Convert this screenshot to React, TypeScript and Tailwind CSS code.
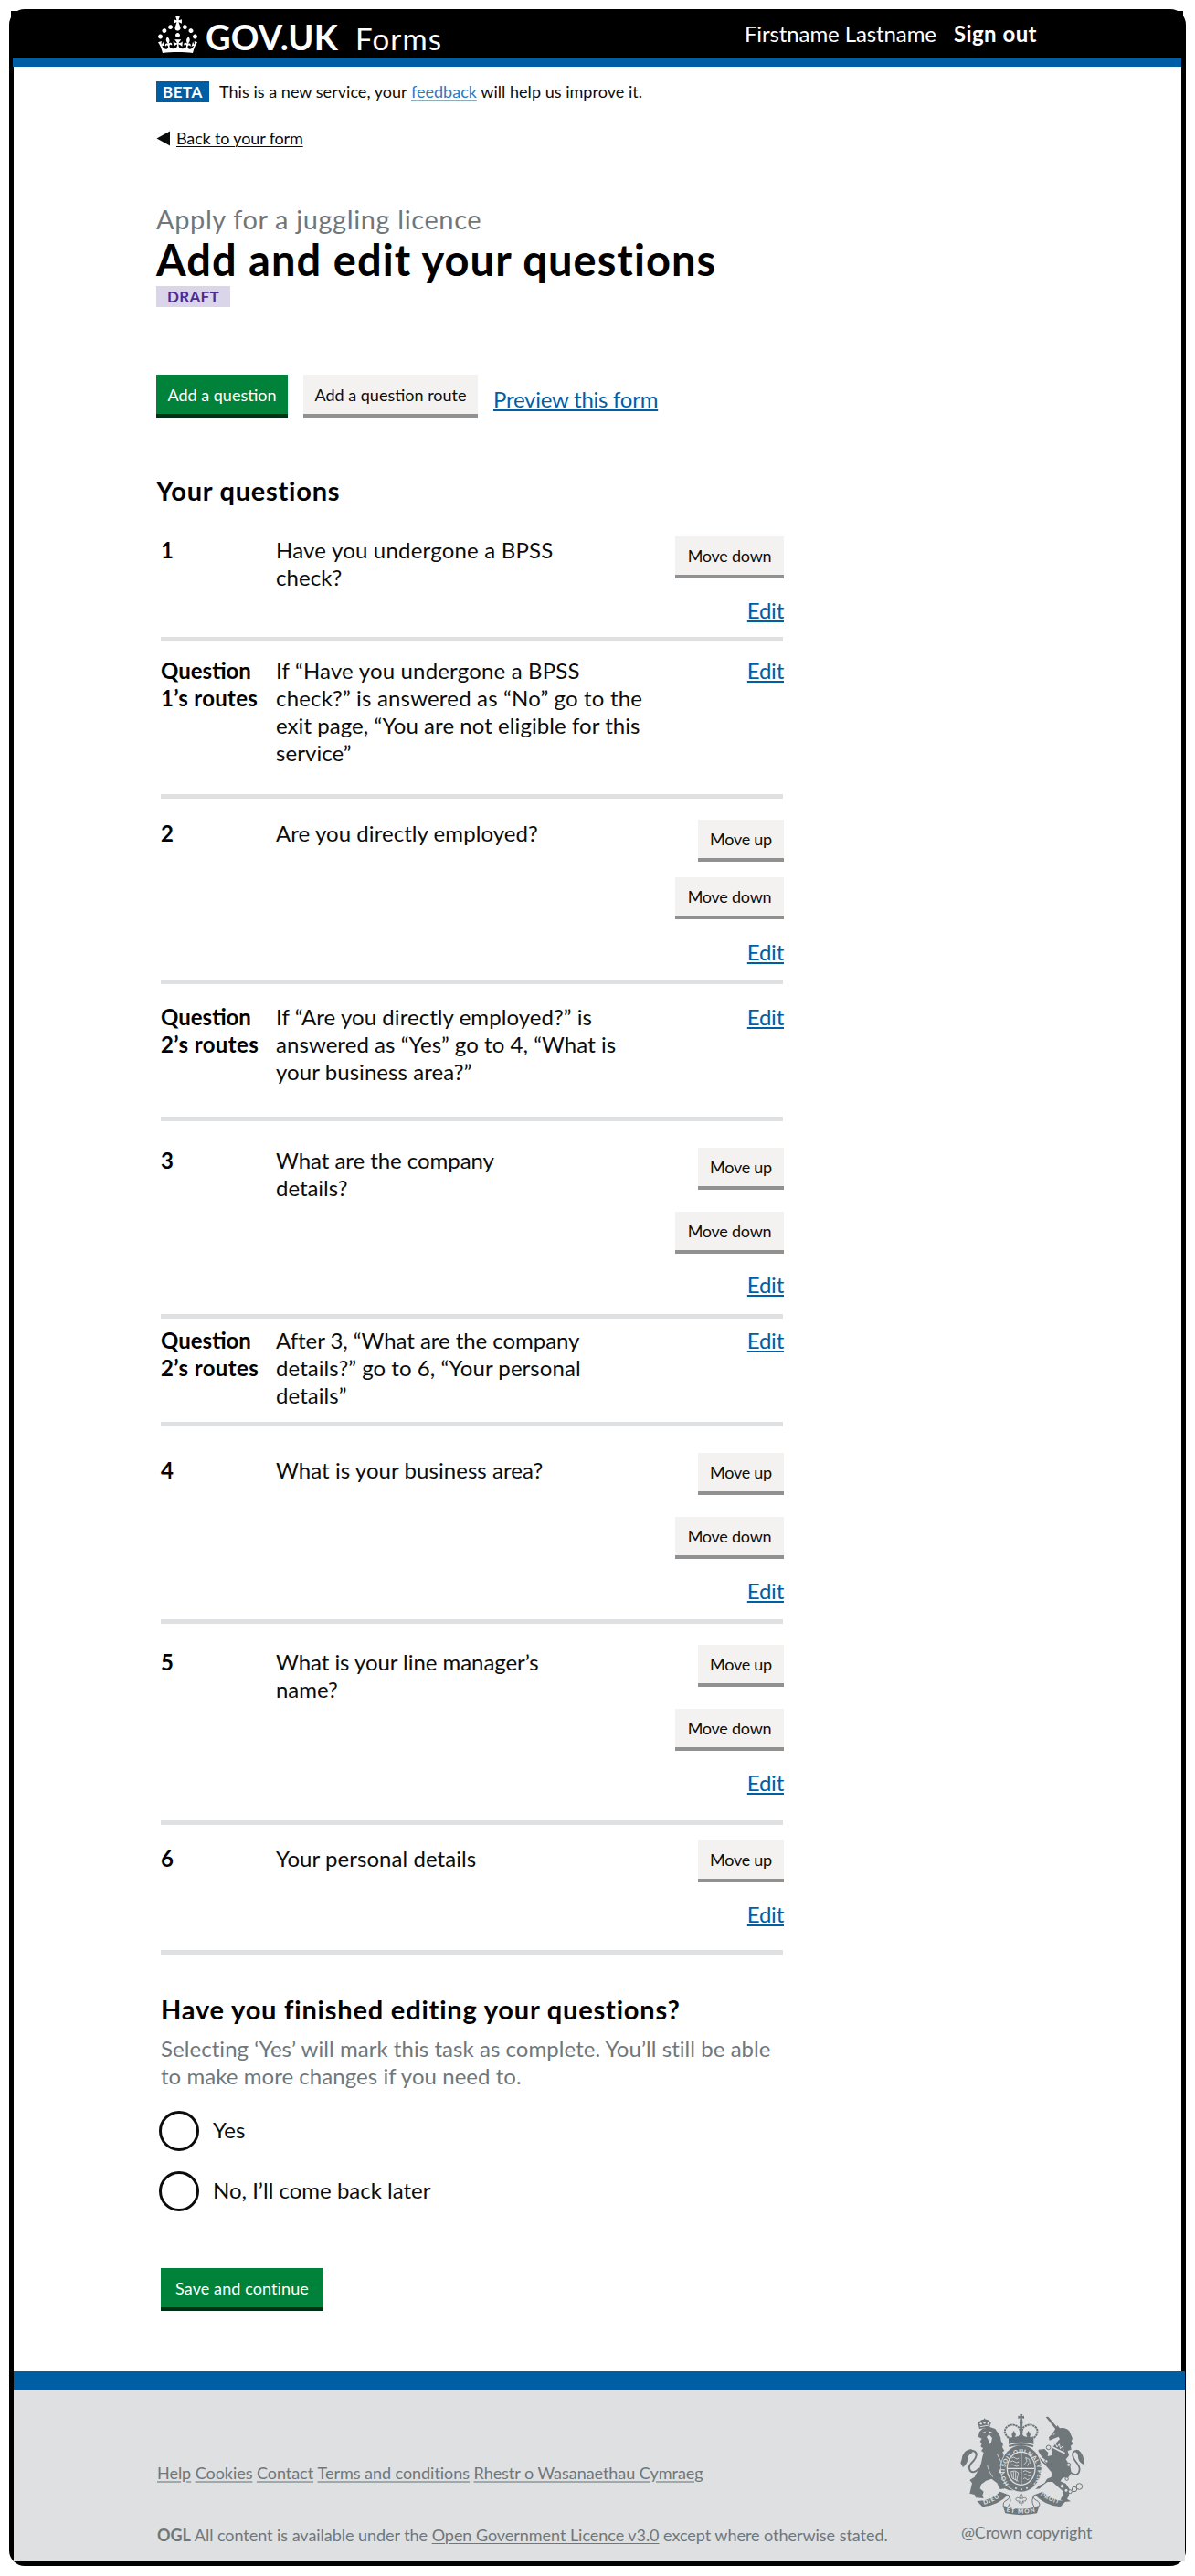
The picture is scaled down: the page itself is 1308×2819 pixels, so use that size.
import React from "react";

const CROWN =
  "M22.6 10.4c-1 .4-2-.1-2.4-1-.4-.9.1-2 1-2.4.9-.4 2 .1 2.4 1s-.1 2-1 2.4m-5.9 6.7c-.9.4-2-.1-2.4-1-.4-.9.1-2 1-2.4.9-.4 2 .1 2.4 1s-.1 2-1 2.4m10.8-3.7c-1 .4-2-.1-2.4-1-.4-.9.1-2 1-2.4.9-.4 2 .1 2.4 1s0 2-1 2.4m3.3 4.8c-1 .4-2-.1-2.4-1-.4-.9.1-2 1-2.4.9-.4 2 .1 2.4 1s-.1 2-1 2.4M17 4.7l2.3 1.2V2.5l-2.3.7-.2-.2.9-3h-3.4l.9 3-.2.2c-.1.1-2.3-.7-2.3-.7v3.4L15 4.7c.1.1.1.2.2.2l-1.3 4c-.1.2-.1.4-.1.6 0 1.1.8 2 1.9 2.2h.7c1-.2 1.9-1.1 1.9-2.1 0-.2 0-.4-.1-.6l-1.3-4c-.1-.2 0-.2.1-.3m-7.6 5.7c.9.4 2-.1 2.4-1 .4-.9-.1-2-1-2.4-.9-.4-2 .1-2.4 1s0 2 1 2.4m-5 3c.9.4 2-.1 2.4-1 .4-.9-.1-2-1-2.4-.9-.4-2 .1-2.4 1s.1 2 1 2.4m-3.2 4.8c.9.4 2-.1 2.4-1 .4-.9-.1-2-1-2.4-.9-.4-2 .1-2.4 1s0 2 1 2.4m14.8 11c4.4 0 8.6.3 12.3.8 1.1-4.5 2.4-7 3.7-8.8l-2.5-.9c.2 1.3.3 1.9 0 2.7-.4-.4-.8-1.1-1.1-2.3l-1.2 4c.7-.5 1.3-.8 2-.9-1.1 2.5-2.6 3.1-3.5 3-1.1-.2-1.7-1.2-1.5-2.1.3-1.2 1.5-1.5 2.1-.1 1.1-2.3-.8-3-2-2.3 1.9-1.9 2.1-3.5.6-5.6-2.1 1.6-2.1 3.2-1.2 5.5-1.2-1.4-3.2-.6-2.5 1.6.9-1.4 2.1-.5 1.9.8-.2 1.1-1.7 2.1-3.5 1.9-2.7-.2-2.9-2.1-2.9-3.6.7-.1 1.9.5 2.9 1.9l.4-4.3c-1.1 1.1-2.1 1.4-3.2 1.4.4-1.2 2.1-3 2.1-3h-5.4s1.7 1.9 2.1 3c-1.1 0-2.1-.2-3.2-1.4l.4 4.3c1-1.4 2.2-2 2.9-1.9-.1 1.5-.2 3.4-2.9 3.6-1.9.2-3.4-.8-3.5-1.9-.2-1.3 1-2.2 1.9-.8.7-2.3-1.2-3-2.5-1.6.9-2.2.9-3.9-1.2-5.5-1.5 2-1.3 3.7.6 5.6-1.2-.7-3.1 0-2 2.3.6-1.4 1.8-1.1 2.1.1.2.9-.3 1.9-1.5 2.1-.9.2-2.4-.5-3.5-3 .6 0 1.2.3 2 .9l-1.2-4c-.3 1.1-.7 1.9-1.1 2.3-.3-.8-.2-1.4 0-2.7l-2.9.9C1.3 23 2.6 25.5 3.7 30c3.7-.5 7.9-.8 12.3-.8";

type Row = {
  label: React.ReactNode;
  text: React.ReactNode;
  row: string;
  textTop: string;
  actionsTop: string;
  up?: boolean;
  down?: boolean;
  gap?: string;
  editGap?: string;
};

const ROWS: Row[] = [
  {
    label: "1",
    text: <><span className="tracking-[0.2px]">Have you undergone a BPSS</span><br />check?</>,
    row: "h-[122px]", textTop: "pt-[7px]", actionsTop: "pt-[7px]", down: true, editGap: "mt-[20px]",
  },
  {
    label: <>Question<br /><span className="tracking-[0.3px]">1’s routes</span></>,
    text: <><span className="tracking-[0.17px]">If “Have you undergone a BPSS</span><br /><span className="tracking-[0.18px]">check?” is answered as “No” go to the</span><br />exit page, “You are not eligible for this<br />service”</>,
    row: "h-[172px]", textTop: "pt-[17px]", actionsTop: "pt-[17px]",
  },
  {
    label: "2",
    text: <>Are you directly employed?</>,
    row: "h-[203px]", textTop: "pt-[23px]", actionsTop: "pt-[23px]", up: true, down: true, gap: "gap-[17px]", editGap: "mt-[21px]",
  },
  {
    label: <>Question<br /><span className="tracking-[0.4px]">2’s routes</span></>,
    text: <>If “Are you directly employed?” is<br />answered as “Yes” go to 4, “What is<br />your business area?”</>,
    row: "h-[150px]", textTop: "pt-[21px]", actionsTop: "pt-[21px]",
  },
  {
    label: "3",
    text: <span className="tracking-[-0.05px]">What are the company<br />details?</span>,
    row: "h-[216px]", textTop: "pt-[28px]", actionsTop: "pt-[29px]", up: true, down: true, gap: "gap-[24px]", editGap: "mt-[19px]",
  },
  {
    label: <>Question<br /><span className="tracking-[0.4px]">2’s routes</span></>,
    text: <><span className="tracking-[-0.05px]">After 3, “What are the company</span><br />details?” go to 6, “Your personal<br />details”</>,
    row: "h-[118px]", textTop: "pt-[9px]", actionsTop: "pt-[9px]",
  },
  {
    label: "4",
    text: <>What is your business area?</>,
    row: "h-[216px]", textTop: "pt-[33px]", actionsTop: "pt-[29px]", up: true, down: true, gap: "gap-[24px]", editGap: "mt-[20px]",
  },
  {
    label: "5",
    text: <span className="tracking-[-0.05px]">What is your line manager’s<br />name?</span>,
    row: "h-[220px]", textTop: "pt-[27px]", actionsTop: "pt-[23px]", up: true, down: true, gap: "gap-[24px]", editGap: "mt-[20px]",
  },
  {
    label: "6",
    text: <>Your personal details</>,
    row: "h-[142px]", textTop: "pt-[22px]", actionsTop: "pt-[17px]", up: true, editGap: "mt-[20px]",
  },
];

function MoveButton({ children, width }: { children: React.ReactNode; width: string }) {
  return (
    <button className={`h-[46px] ${width} border-b-[4px] border-[#929191] bg-[#f3f2f1] text-center text-[18px] leading-[41px] tracking-[-0.25px] whitespace-nowrap text-[#0b0c0c]`}>
      {children}
    </button>
  );
}

function QuestionRow({ r }: { r: Row }) {
  return (
    <li className={`flex border-b-[5px] border-[#dee0e2] text-[24px] leading-[30px] ${r.row}`}>
      <div className={`w-[126px] shrink-0 font-bold text-black ${r.textTop}`}>{r.label}</div>
      <div className={`flex-1 tracking-[0.06px] whitespace-nowrap ${r.textTop}`}>{r.text}</div>
      <div className={`-mr-[1px] flex shrink-0 flex-col items-end ${r.actionsTop}`}>
        {(r.up || r.down) && (
          <div className={`flex flex-col items-end ${r.gap ?? ""}`}>
            {r.up && <MoveButton width="w-[94px]">Move up</MoveButton>}
            {r.down && <MoveButton width="w-[119px]">Move down</MoveButton>}
          </div>
        )}
        <a className={`tracking-[-0.25px] text-[#005ea5] underline decoration-[1.5px] underline-offset-[2px] ${r.editGap ?? ""}`}>Edit</a>
      </div>
    </li>
  );
}

function Crest() {
  const ink = "#6f777b";
  const paper = "#dee0e2";
  return (
    <svg viewBox="0 0 450 372" className="h-[124px] w-[150px]" fill={ink}>
      <defs>
        <path id="garter" d="M175 248A54 61 0 1 1 254 250" />
        <path id="dieu" d="M93 315Q122 308 152 285" />
        <path id="mon" d="M166 337Q215 350 266 337" />
        <path id="droit" d="M278 283Q310 307 350 314" />
      </defs>

      {/* ribbon */}
      <path d="M70 303Q118 302 146 272L172 282Q140 318 88 322Z" />
      <path d="M362 303Q314 302 286 272L260 282Q292 318 344 322Z" />
      <path d="M155 318Q215 340 275 318L267 343Q215 354 163 343Z" />
      <path d="M172 282Q182 292 168 300Q154 306 157 319M260 282Q250 292 264 300Q278 306 275 319M172 282Q188 300 172 322M260 282Q244 300 258 322" fill="none" stroke={ink} strokeWidth="3" />
      <g fill={paper} fontFamily="Lato" fontWeight="900">
        <text fontSize="20"><textPath href="#dieu" textLength="56">DIEU</textPath></text>
        <text fontSize="20"><textPath href="#mon" textLength="96">ET MON</textPath></text>
        <text fontSize="18"><textPath href="#droit" textLength="66">DROIT</textPath></text>
      </g>
      <path d="M215 278q-9 10-3 18q-11-9-15 1q2 9 14 6l-4 6h16l-4-6q12 3 14-6q-4-10-15-1q6-8-3-18Z" fill={paper} stroke={ink} strokeWidth="2.5" />
      <path d="M213 308h4v10h-4Z" />

      {/* lion */}
      <path d="M78 66l-4-16q-3-9 6-9q3-6 12-6l3-4l3 4q10-1 12 6q8 1 5 9l-4 12Z" />
      <g fill={paper}>
        <circle cx="83" cy="49" r="3.5" /><circle cx="95" cy="46" r="3.5" /><circle cx="107" cy="48" r="3.5" />
        <path d="M80 58l32-6v3l-32 6Z" />
      </g>
      <path d="M78 76L88 66L112 60L130 66L140 80L147 92L149 106L156 116L153 126L160 138L154 142L160 158L172 180L160 176L164 196L148 192L142 210L158 214L160 236L170 248L186 258L192 268L176 268L162 262L146 264L136 244L118 230L100 236L84 248L80 262L92 272L88 284L92 294L66 292L62 282L46 278L50 262L54 244L46 234L62 224L68 212L78 196L84 178L88 158L92 144L84 138L90 130L82 124L86 114L80 108L86 98L74 92Z" />
      <path d="M88 78l12-4l-5 6zM108 74l12 2l-8 4zM102 92l8-8l10 12l-3 14l-6 6l-3-12Z" fill={paper} />
      <path d="M136 148L150 176L146 188M104 186Q110 210 122 224" fill="none" stroke={paper} strokeWidth="2.5" />
      <path d="M78 196Q54 218 46 200Q40 188 58 172Q76 150 62 140Q48 132 34 146Q22 160 24 176" fill="none" stroke={ink} strokeWidth="6" />
      <path d="M52 132Q24 134 20 166L16 178L24 192Q38 182 40 166Q40 150 56 144Z" />

      {/* unicorn */}
      <path d="M296 27L304 26L336 64L329 68Z" />
      <path d="M328 66L334 54L342 64Q362 60 374 74L384 98L380 106L386 114L378 122L380 134L368 138L372 154L362 166L376 188L380 210L370 226L352 226L344 238L362 246L374 264L372 284L366 296L378 304L356 306L344 298L352 284L352 270L338 258L318 240L302 240L288 250L276 262L262 264L274 252L292 244L300 230L314 224L316 210L304 196L292 182L280 172L274 158L286 170L296 180L300 172L284 160L272 140L272 134L292 132L304 144L302 156L318 152L314 134L322 120L342 100L338 92L322 98L308 104L306 94L316 84Z" />
      <path d="M318 84l8-3l-2 5zM316 122l44 22l-2 5l-44-22Z" fill={paper} />
      <path d="M322 122l5-10l6 14l7-10l4 15l7-8l3 13" fill="none" stroke={paper} strokeWidth="3" />
      <path d="M378 210Q396 222 404 210Q412 196 398 178Q384 162 384 148Q388 136 402 138Q418 150 420 178" fill="none" stroke={ink} strokeWidth="5" />
      <path d="M396 134Q414 140 414 162Q422 170 422 184Q402 174 402 158Q402 146 392 142Z" />
      <g fill={paper} stroke={ink} strokeWidth="3">
        <circle cx="305" cy="127" r="7" /><circle cx="298" cy="172" r="5" /><circle cx="371" cy="184" r="6" />
        <circle cx="365" cy="230" r="5" /><circle cx="350" cy="254" r="7" /><circle cx="363" cy="268" r="6" />
        <circle cx="376" cy="272" r="6" /><circle cx="390" cy="264" r="8" /><circle cx="406" cy="255" r="10" />
      </g>

      {/* garter and shield */}
      <ellipse cx="215" cy="196" rx="68" ry="78" fill={paper} />
      <ellipse cx="215" cy="196" rx="66" ry="76" />
      <text fill={paper} fontFamily="Lato" fontWeight="900" fontSize="19">
        <textPath href="#garter" textLength="280">HONI SOIT QUI MAL Y PENSE</textPath>
      </text>
      <ellipse cx="215" cy="196" rx="48" ry="56" fill={paper} />
      <ellipse cx="215" cy="196" rx="44" ry="52" />
      <g fill="none" stroke={paper} strokeWidth="4">
        <path d="M215 144v104M171 196h88" />
      </g>
      <g fill="none" stroke={paper} strokeWidth="2.5">
        <path d="M184 162q7-6 12 0t12 0M180 174q8-6 14 0t14 0M178 186q8-6 15 0t15 0" />
        <path d="M222 206q7-6 14 0t14 0M222 218q7-6 14 0t12 0M222 230q6-6 10 0t10 0" />
        <path d="M224 184l10-12l-4-12l12 6l2 12l8 8M236 188l4-10" />
        <path d="M182 206l4 22l20 10M190 206v26M197 206v28M182 206q14-6 24 4l-6 28" />
      </g>
      <g fill={paper}><circle cx="198" cy="261" r="3" /><circle cx="216" cy="265" r="3" /><circle cx="234" cy="260" r="3" /></g>

      {/* crown */}
      <path d="M211 18h9l-2 7l7-2v10l-7-2l2 9h-10l2-9l-7 2v-10l7 2Z" />
      <circle cx="215" cy="44" r="6" />
      <path d="M174 96Q154 78 166 62Q184 44 206 60Q214 66 215 98M257 96Q276 78 264 62Q246 44 224 60Q216 66 215 98" fill="none" stroke={ink} strokeWidth="6" strokeDasharray="7 2" />
      <path d="M215 46v50" stroke={ink} strokeWidth="9" />
      <path d="M215 52v36" stroke={paper} strokeWidth="2" strokeDasharray="4 4" />
      <path d="M174 98L177 90L182 95L186 92L184 84L191 72L198 84L195 93L206 90L215 80L224 90L235 93L232 84L239 72L246 84L244 92L248 95L253 90L256 98L256 116Q215 104 174 116Z" />
      <path d="M174 120Q215 108 256 120L254 126Q215 114 176 126Z" />
    </svg>
  );
}

function Radio({ children }: { children: React.ReactNode }) {
  return (
    <label className="flex h-[44px] items-center gap-[15px]">
      <span className="h-[44px] w-[44px] rounded-full border-[3px] border-[#0b0c0c] bg-white" />
      <span className="pb-[2px] text-[24px] leading-[30px]">{children}</span>
    </label>
  );
}

export default function App() {
  const footerLink = "underline decoration-[#9fa8ab] decoration-[2px] underline-offset-[2px]";
  return (
    <div className="h-[2819px] w-[1308px] bg-white pt-[10px] pl-[10px] font-[Lato,sans-serif] text-[#0b0c0c]">
      <div className="flex h-[2798px] w-[1288px] flex-col rounded-[17px] border-[5px] border-t-[2px] border-black">
        <header className="-mr-[2px] -ml-[3px] flex h-[52px] shrink-0 bg-black pl-[161px] text-white">
          <svg viewBox="0 0 32 30" className="mt-[6px] h-[40px] w-[43px] fill-white" preserveAspectRatio="none">
            <path d={CROWN} />
          </svg>
          <div className="mt-[5px] flex items-baseline pl-[9px]">
            <span className="text-[38px] leading-[46px] font-bold tracking-[0.2px]">GOV.UK</span>
            <span className="pl-[19px] text-[33px] leading-[46px] tracking-[1.2px]">Forms</span>
          </div>
          <div className="mt-[10px] ml-auto flex gap-[19px] pr-[160px] text-[24px] leading-[30px]">
            <span className="tracking-[-0.1px]">Firstname Lastname</span>
            <span className="font-bold tracking-[0.45px]">Sign out</span>
          </div>
        </header>
        <div className="-ml-[1px] h-[9px] shrink-0 bg-[#005ea5]" />

        <main className="flex flex-col pl-[156px]">
          <div className="mt-[16px] flex h-[23px] items-center text-[18px] leading-[22px]">
            <strong className="flex h-[23px] w-[58px] items-center justify-center bg-[#005ea5] text-[17px] tracking-[0.5px] text-white">BETA</strong>
            <p className="pb-[1px] pl-[11px] tracking-[0.03px] whitespace-nowrap">
              This is a new service, your{" "}
              <a className="text-[#2b7bbd] underline decoration-[#80aed2] decoration-[2px] underline-offset-[2px]">feedback</a>{" "}
              will help us improve it.
            </p>
          </div>

          <a className="mt-[28px] flex h-[22px] items-center text-[18px] leading-[22px] tracking-[-0.15px]">
            <svg viewBox="0 0 15 17" className="h-[17px] w-[15px] fill-[#0b0c0c]"><path d="M0.5 8.5L15 0.5V16.5Z" /></svg>
            <span className="ml-[7px] underline decoration-[1px] underline-offset-[2px]">Back to your form</span>
          </a>

          <p className="mt-[60px] text-[29px] leading-[36px] tracking-[0.6px] text-[#6f777b]">Apply for a juggling licence</p>
          <h1 className="mt-[1px] text-[47px] leading-[50px] font-bold tracking-[1.05px] text-black">Add and edit your questions</h1>
          <strong className="mt-[4px] flex h-[23px] w-[81px] items-center justify-center bg-[#dbd5e9] text-[17px] leading-[22px] tracking-[0.3px] text-[#4c2c92]">DRAFT</strong>

          <div className="mt-[74px] flex h-[47px] items-start text-[18px]">
            <button className="h-[47px] w-[144px] border-b-[4px] border-[#002d18] bg-[#00823b] text-center leading-[42px] text-white">Add a question</button>
            <button className="ml-[17px] h-[47px] w-[191px] border-b-[4px] border-[#929191] bg-[#f3f2f1] text-center leading-[42px]">Add a question route</button>
            <a className="mt-[12px] ml-[17px] text-[24px] leading-[30px] tracking-[-0.25px] text-[#005ea5] underline decoration-[1.5px] underline-offset-[2px]">Preview this form</a>
          </div>

          <h2 className="mt-[62px] text-[29px] leading-[36px] font-bold tracking-[0.75px] text-black">Your questions</h2>

          <ul className="mt-[25px] ml-[5px] w-[681px]">
            {ROWS.map((r, i) => (
              <QuestionRow key={i} r={r} />
            ))}
          </ul>

          <section className="mt-[42px] ml-[5px] flex flex-col">
            <h2 className="text-[29px] leading-[36px] font-bold tracking-[0.8px] text-black">Have you finished editing your questions?</h2>
            <p className="mt-[10px] text-[24px] leading-[30px] tracking-[0.05px] text-[#6f777b]">
              Selecting ‘Yes’ will mark this task as complete. You’ll still be able
              <br />
              to make more changes if you need to.
            </p>
            <div className="mt-[23px] -ml-[2px] flex flex-col gap-[22px]">
              <Radio>Yes</Radio>
              <Radio>No, I’ll come back later</Radio>
            </div>
            <button className="mt-[62px] h-[47px] w-[178px] border-b-[4px] border-[#002d18] bg-[#00823b] text-center text-[18px] leading-[42px] tracking-[0.1px] text-white">Save and continue</button>
          </section>
        </main>

        <footer className="mt-auto -mr-[4px] flex h-[208px] shrink-0 justify-between border-t-[20px] border-[#005ea5] bg-[#dee0e2] pl-[157px] text-[18px] leading-[22px] tracking-[-0.04px] whitespace-nowrap text-[#6f777b]">
          <div className="flex flex-col pt-[80px]">
            <nav className="flex gap-[4.5px]">
              <a className={footerLink}>Help</a>
              <a className={footerLink}>Cookies</a>
              <a className={footerLink}>Contact</a>
              <a className={footerLink}>Terms and conditions</a>
              <a className={footerLink}>Rhestr o Wasanaethau Cymraeg</a>
            </nav>
            <p className="mt-[46px]">
              <strong>OGL</strong> All content is available under the{" "}
              <a className="underline decoration-[1px] underline-offset-[2px]">Open Government Licence v3.0</a> except where otherwise stated.
            </p>
          </div>
          <div className="mr-[101px] flex flex-col pt-[21px]">
            <Crest />
            <p className="pl-[6px] tracking-[-0.2px]">@Crown copyright</p>
          </div>
        </footer>
      </div>
    </div>
  );
}
